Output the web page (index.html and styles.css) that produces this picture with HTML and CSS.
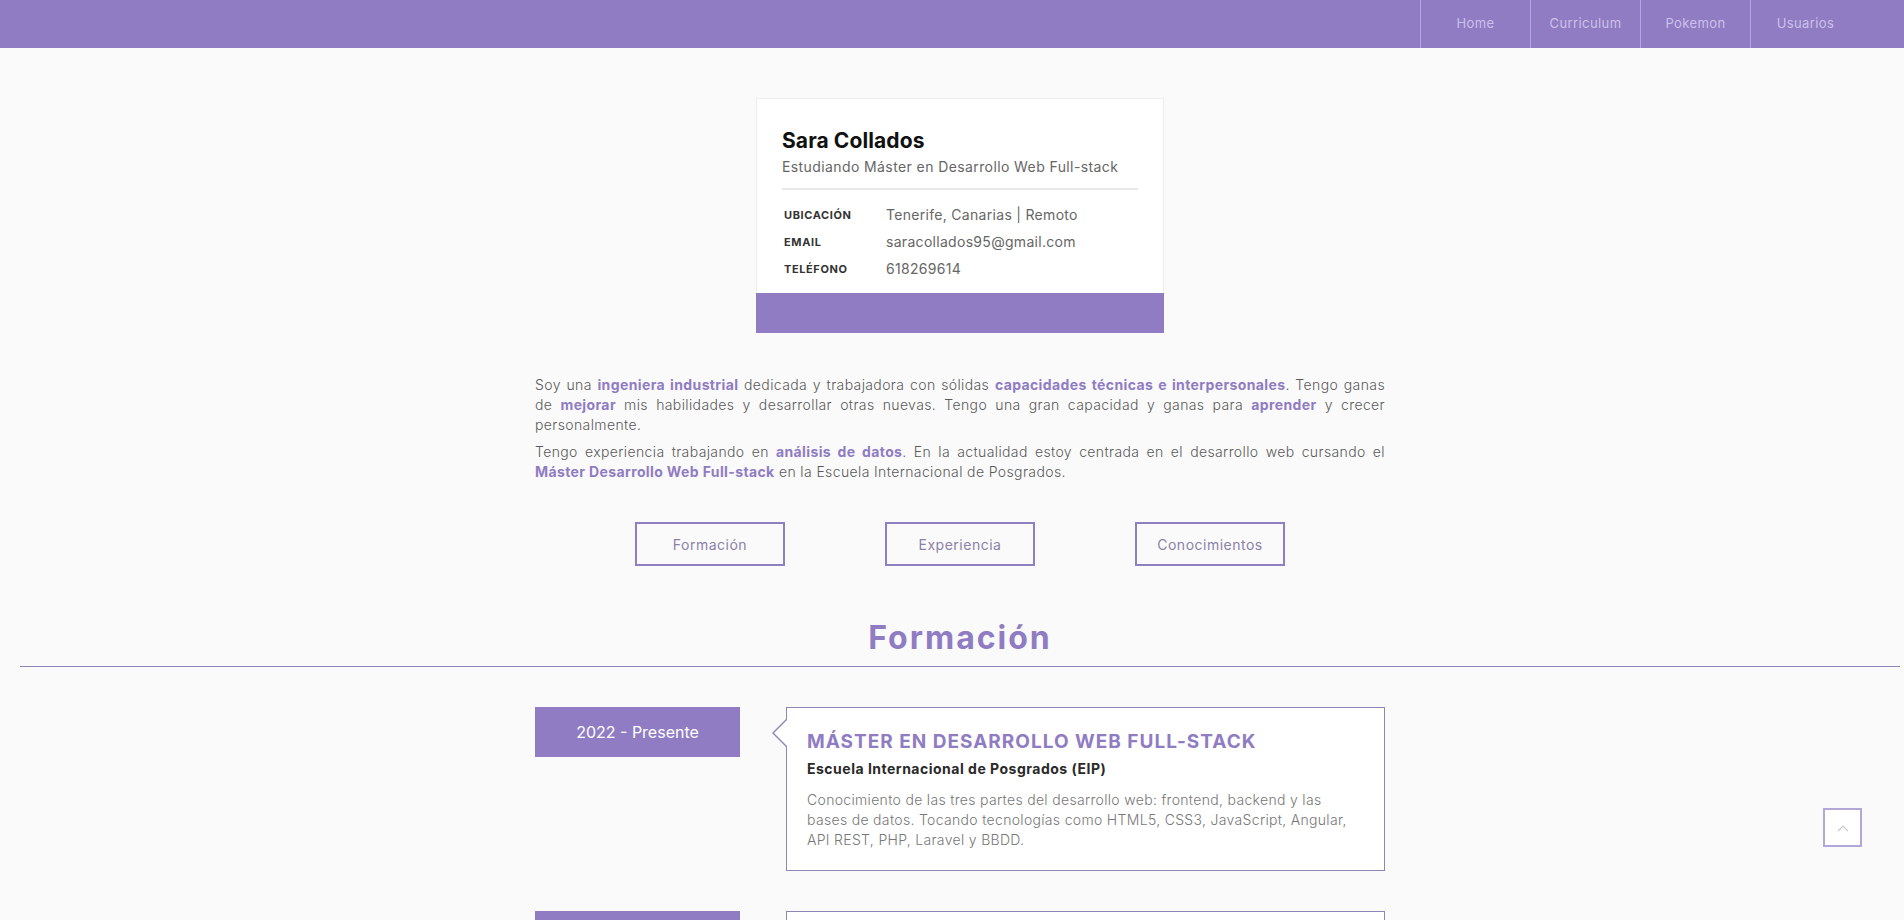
FILE: index.html
```html
<!DOCTYPE html>
<html lang="es">
<head>
<meta charset="utf-8">
<title>Sara Collados - Curriculum</title>
<link rel="stylesheet" href="styles.css">
</head>
<body>
<header class="topbar">
  <nav>
    <ul class="menu">
      <li><a href="#">Home</a></li>
      <li><a href="#">Curriculum</a></li>
      <li><a href="#">Pokemon</a></li>
      <li><a href="#">Usuarios</a></li>
    </ul>
  </nav>
</header>

<main class="page">
  <section class="profile">
    <div class="profile-body">
      <h1 class="name">Sara Collados</h1>
      <p class="role">Estudiando Máster en Desarrollo Web Full-stack</p>
      <hr class="divider">
      <dl class="facts">
        <dt>Ubicación</dt><dd>Tenerife, Canarias | Remoto</dd>
        <dt>Email</dt><dd>saracollados95@gmail.com</dd>
        <dt>Teléfono</dt><dd>618269614</dd>
      </dl>
    </div>
    <div class="profile-foot"></div>
  </section>

  <section class="about">
    <p>Soy una <strong>ingeniera industrial</strong> dedicada y trabajadora con sólidas <strong>capacidades técnicas e interpersonales</strong>. Tengo ganas de <strong>mejorar</strong> mis habilidades y desarrollar otras nuevas. Tengo una gran capacidad y ganas para <strong>aprender</strong> y crecer personalmente.</p>
    <p>Tengo experiencia trabajando en <strong>análisis de datos</strong>. En la actualidad estoy centrada en el desarrollo web cursando el <strong>Máster Desarrollo Web Full-stack</strong> en la Escuela Internacional de Posgrados.</p>
  </section>

  <div class="tabs">
    <a class="tab" href="#formacion">Formación</a>
    <a class="tab" href="#experiencia">Experiencia</a>
    <a class="tab" href="#conocimientos">Conocimientos</a>
  </div>

  <h2 class="section-title" id="formacion">Formación</h2>
  <hr class="section-rule">

  <div class="timeline">
    <article class="entry">
      <div class="entry-date">2022 - Presente</div>
      <div class="entry-card">
        <h3 class="entry-title">Máster en Desarrollo Web Full-stack</h3>
        <p class="entry-school">Escuela Internacional de Posgrados (EIP)</p>
        <p class="entry-text">Conocimiento de las tres partes del desarrollo web: frontend, backend y las bases de datos. Tocando tecnologías como HTML5, CSS3, JavaScript, Angular, API REST, PHP, Laravel y BBDD.</p>
      </div>
    </article>
    <article class="entry">
      <div class="entry-date">2013 - 2019</div>
      <div class="entry-card">
        <h3 class="entry-title">Grado en Ingeniería Industrial</h3>
        <p class="entry-school">Universidad de La Laguna</p>
        <p class="entry-text">Formación en ingeniería con base técnica, gestión de proyectos y análisis de datos.</p>
      </div>
    </article>
  </div>
</main>

<a class="to-top" href="#" aria-label="Subir">
  <svg width="12" height="8" viewBox="0 0 12 8"><polyline points="1,7 6,2 11,7" fill="none" stroke="#c8c8c8" stroke-width="1.2"/></svg>
</a>
</body>
</html>
```

FILE: styles.css
```css
html { scrollbar-width: none; }
html::-webkit-scrollbar { display: none; }

body {
  margin: 0;
  background: #fafafa;
  font-family: Inter, "Open Sans", Arial, sans-serif;
  color: #555;
}

.topbar {
  height: 48px;
  background: #8f7cc3;
}

.menu {
  list-style: none;
  margin: 0;
  padding: 0 44px 0 0;
  display: flex;
  justify-content: flex-end;
  height: 48px;
}

.menu li {
  box-sizing: border-box;
  width: 110px;
  border-left: 1px solid #b5a6de;
  display: flex;
  align-items: center;
  justify-content: center;
  padding-bottom: 3px;
}

.menu a {
  color: #cdc1ec;
  text-decoration: none;
  font-size: 13px;
  letter-spacing: 0.4px;
}

.page {
  padding: 0 4px 0 20px;
}

/* profile card */
.profile {
  width: 408px;
  box-sizing: border-box;
  margin: 50px auto 0;
  background: #fff;
  border: 1px solid #ececec;
  border-bottom: 0;
}

.profile-body {
  padding: 30px 25px 11px;
}

.name {
  margin: 0;
  font-size: 21px;
  line-height: 24px;
  font-weight: 700;
  color: #111;
  letter-spacing: 0.1px;
}

.role {
  margin: 4px 0 0;
  font-size: 14px;
  line-height: 20px;
  color: #666;
  letter-spacing: 0.4px;
}

.divider {
  margin: 11px 0 0;
  border: 0;
  border-top: 2px solid #e8e8e8;
}

.facts {
  margin: 11px 0 0;
  display: grid;
  grid-template-columns: 104px 1fr;
  grid-auto-rows: 27px;
  align-items: center;
}

.facts dt {
  padding-left: 2px;
  font-size: 11px;
  font-weight: 700;
  text-transform: uppercase;
  color: #333;
  letter-spacing: 0.6px;
}

.facts dd {
  margin: 0;
  font-size: 14px;
  color: #666;
  letter-spacing: 0.3px;
}

.profile-foot {
  height: 40px;
  margin: 0 -1px;
  background: #8f7cc3;
}

/* about */
.about {
  width: 850px;
  margin: 42px auto 0;
}

.about p {
  margin: 0;
  font-size: 14px;
  line-height: 20px;
  text-align: justify;
  color: #5a5a5a;
  font-weight: 300;
  letter-spacing: 0.38px;
}

.about p + p {
  margin-top: 7px;
}

.about strong {
  color: #8f7cc3;
  font-weight: 700;
}

/* tabs */
.tabs {
  margin-top: 40px;
  display: flex;
  justify-content: center;
  gap: 100px;
}

.tab {
  width: 150px;
  height: 44px;
  box-sizing: border-box;
  border: 2px solid #8e7fbf;
  display: flex;
  align-items: center;
  justify-content: center;
  font-size: 14px;
  color: #8a82a8;
  text-decoration: none;
  letter-spacing: 0.5px;
}

/* section */
.section-title {
  margin: 52px 0 0;
  text-align: center;
  font-size: 32px;
  line-height: 40px;
  font-weight: 700;
  letter-spacing: 2px;
  color: #8f7cc3;
}

.section-rule {
  margin: 8px 0 0;
  border: 0;
  border-top: 1px solid #8e86b6;
}

/* timeline */
.timeline {
  width: 850px;
  margin: 40px auto 0;
}

.entry {
  display: grid;
  grid-template-columns: 205px 1fr;
  column-gap: 46px;
  align-items: start;
  margin-bottom: 40px;
}

.entry-date {
  height: 50px;
  background: #8f7cc3;
  color: #fff;
  font-size: 16px;
  display: flex;
  align-items: center;
  justify-content: center;
}

.entry-card {
  position: relative;
  background: #fff;
  border: 1px solid #8e86b6;
  padding: 22px 20px 20px 20px;
}

.entry-card::before,
.entry-card::after {
  content: "";
  position: absolute;
  top: 11px;
  border-top: 14px solid transparent;
  border-bottom: 14px solid transparent;
}

.entry-card::before {
  left: -15px;
  border-right: 14px solid #8e86b6;
}

.entry-card::after {
  left: -13px;
  border-right: 14px solid #fff;
}

.entry-title {
  margin: 0;
  font-size: 19px;
  line-height: 24px;
  font-weight: 700;
  text-transform: uppercase;
  color: #8f7cc3;
  letter-spacing: 1px;
}

.entry-school {
  margin: 5px 0 0;
  font-size: 14px;
  line-height: 20px;
  font-weight: 700;
  color: #2a2a2a;
  letter-spacing: 0.5px;
}

.entry-text {
  margin: 11px 0 0;
  font-size: 14px;
  line-height: 20px;
  color: #777;
  font-weight: 300;
  letter-spacing: 0.32px;
}

/* back to top */
.to-top {
  position: fixed;
  right: 42px;
  bottom: 73px;
  width: 39px;
  height: 39px;
  box-sizing: border-box;
  border: 2px solid #b3a7d8;
  background: #fff;
  display: flex;
  align-items: center;
  justify-content: center;
}
```
